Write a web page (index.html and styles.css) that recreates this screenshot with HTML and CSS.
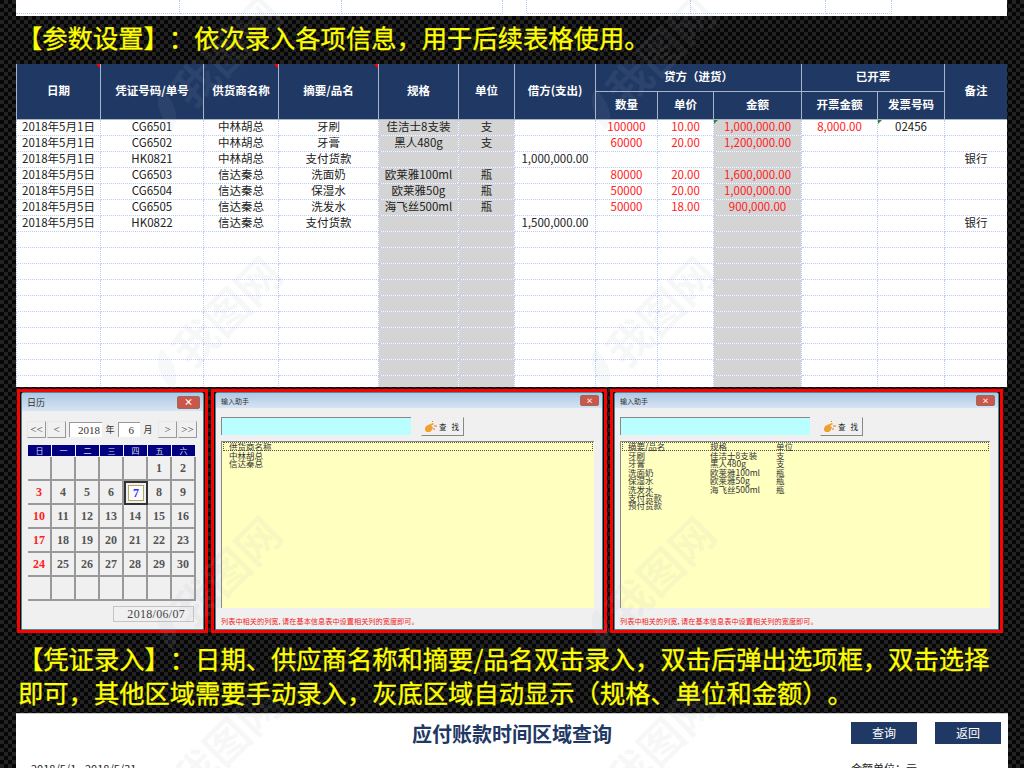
FILE: index.html
```html
<!DOCTYPE html>
<html lang="zh-CN">
<head>
  <meta charset="UTF-8">
  <title>凭证录入</title>
  <link rel="stylesheet" href="styles.css">
</head>
<body>
<div class="page">

  <div class="top-strip"><i></i><i></i><i></i><i></i><i></i><i></i><i></i></div>

  <h2 class="note-line first">【参数设置】<span class="p">：</span>依次录入各项信息<span class="p">，</span>用于后续表格使用。</h2>

  <div class="sheet">
    <table>
      <colgroup>
        <col class="c1"><col class="c2"><col class="c3"><col class="c4">
        <col class="c5 grey"><col class="c6 grey"><col class="c7"><col class="c8"><col class="c9">
        <col class="c10 grey"><col class="c11"><col class="c12"><col class="c13">
      </colgroup>
      <thead>
        <tr>
          <th rowspan="2" class="flag">日期</th>
          <th rowspan="2">凭证号码/单号</th>
          <th rowspan="2" class="flag">供货商名称</th>
          <th rowspan="2" class="flag">摘要/品名</th>
          <th rowspan="2">规格</th>
          <th rowspan="2">单位</th>
          <th rowspan="2">借方(支出)</th>
          <th colspan="3">贷方（进货）</th>
          <th colspan="2">已开票</th>
          <th rowspan="2">备注</th>
        </tr>
        <tr>
          <th>数量</th><th>单价</th><th>金额</th><th>开票金额</th><th>发票号码</th>
        </tr>
      </thead>
      <tbody>
        <tr><td>2018年5月1日</td><td>CG6501</td><td>中林胡总</td><td>牙刷</td><td>佳洁士8支装</td><td>支</td><td></td><td class="red">100000</td><td class="red">10.00</td><td class="red tick">1,000,000.00</td><td class="red">8,000.00</td><td class="tick">02456</td><td></td></tr>
        <tr><td>2018年5月1日</td><td>CG6502</td><td>中林胡总</td><td>牙膏</td><td>黑人480g</td><td>支</td><td></td><td class="red">60000</td><td class="red">20.00</td><td class="red">1,200,000.00</td><td></td><td></td><td></td></tr>
        <tr><td>2018年5月1日</td><td>HK0821</td><td>中林胡总</td><td>支付货款</td><td></td><td></td><td>1,000,000.00</td><td></td><td></td><td></td><td></td><td></td><td>银行</td></tr>
        <tr><td>2018年5月5日</td><td>CG6503</td><td>信达秦总</td><td>洗面奶</td><td>欧莱雅100ml</td><td>瓶</td><td></td><td class="red">80000</td><td class="red">20.00</td><td class="red">1,600,000.00</td><td></td><td></td><td></td></tr>
        <tr><td>2018年5月5日</td><td>CG6504</td><td>信达秦总</td><td>保湿水</td><td>欧莱雅50g</td><td>瓶</td><td></td><td class="red">50000</td><td class="red">20.00</td><td class="red">1,000,000.00</td><td></td><td></td><td></td></tr>
        <tr><td>2018年5月5日</td><td>CG6505</td><td>信达秦总</td><td>洗发水</td><td>海飞丝500ml</td><td>瓶</td><td></td><td class="red">50000</td><td class="red">18.00</td><td class="red">900,000.00</td><td></td><td></td><td></td></tr>
        <tr><td>2018年5月5日</td><td>HK0822</td><td>信达秦总</td><td>支付货款</td><td></td><td></td><td>1,500,000.00</td><td></td><td></td><td></td><td></td><td></td><td>银行</td></tr>
        <tr><td></td><td></td><td></td><td></td><td></td><td></td><td></td><td></td><td></td><td></td><td></td><td></td><td></td></tr>
        <tr><td></td><td></td><td></td><td></td><td></td><td></td><td></td><td></td><td></td><td></td><td></td><td></td><td></td></tr>
        <tr><td></td><td></td><td></td><td></td><td></td><td></td><td></td><td></td><td></td><td></td><td></td><td></td><td></td></tr>
        <tr><td></td><td></td><td></td><td></td><td></td><td></td><td></td><td></td><td></td><td></td><td></td><td></td><td></td></tr>
        <tr><td></td><td></td><td></td><td></td><td></td><td></td><td></td><td></td><td></td><td></td><td></td><td></td><td></td></tr>
        <tr><td></td><td></td><td></td><td></td><td></td><td></td><td></td><td></td><td></td><td></td><td></td><td></td><td></td></tr>
        <tr><td></td><td></td><td></td><td></td><td></td><td></td><td></td><td></td><td></td><td></td><td></td><td></td><td></td></tr>
        <tr><td></td><td></td><td></td><td></td><td></td><td></td><td></td><td></td><td></td><td></td><td></td><td></td><td></td></tr>
        <tr><td></td><td></td><td></td><td></td><td></td><td></td><td></td><td></td><td></td><td></td><td></td><td></td><td></td></tr>
        <tr><td></td><td></td><td></td><td></td><td></td><td></td><td></td><td></td><td></td><td></td><td></td><td></td><td></td></tr>
      </tbody>
    </table>
  </div>

  <div class="shots">

    <div class="shot cal-shot">
      <div class="win">
        <div class="titlebar big"><span>日历</span><b class="close">×</b></div>
        <div class="cal-body">
          <div class="cal-nav">
            <span class="nav-btn">&lt;&lt;</span>
            <span class="nav-btn">&lt;</span>
            <span class="nav-field year">2018</span>
            <span class="nav-label">年</span>
            <span class="nav-field month">6</span>
            <span class="nav-label">月</span>
            <span class="nav-btn push">&gt;</span>
            <span class="nav-btn">&gt;&gt;</span>
          </div>
          <div class="cal-head">
            <span>日</span><span>一</span><span>二</span><span>三</span><span>四</span><span>五</span><span>六</span>
          </div>
          <div class="cal-grid">
            <span></span><span></span><span></span><span></span><span></span><span>1</span><span>2</span>
            <span class="sun">3</span><span>4</span><span>5</span><span>6</span><span class="today"><em>7</em></span><span>8</span><span>9</span>
            <span class="sun">10</span><span>11</span><span>12</span><span>13</span><span>14</span><span>15</span><span>16</span>
            <span class="sun">17</span><span>18</span><span>19</span><span>20</span><span>21</span><span>22</span><span>23</span>
            <span class="sun">24</span><span>25</span><span>26</span><span>27</span><span>28</span><span>29</span><span>30</span>
            <span></span><span></span><span></span><span></span><span></span><span></span><span></span>
          </div>
          <div class="cal-foot"><span class="cal-date">2018/06/07</span></div>
        </div>
      </div>
    </div>

    <div class="shot helper-shot wide">
      <div class="win">
        <div class="titlebar"><span>输入助手</span><b class="close">×</b></div>
        <div class="helper-body">
          <div class="search-row">
            <div class="search-box"></div>
            <div class="find-btn">
              <svg width="13" height="12" viewBox="0 0 13 12"><path d="M1 8c0-2 1-3 3-4l5-2 1 1-3 2 2 1-1 3-2 2H3C2 11 1 10 1 8z" fill="#f0a030"/><path d="M10 5h3M9 8h2M8 0l1 1" stroke="#e07818" fill="none"/></svg>
              <span>查   找</span>
            </div>
          </div>
          <div class="list">
            <div class="list-row head"><span>供货商名称</span></div>
            <div class="list-row"><span>中林胡总</span></div>
            <div class="list-row"><span>信达秦总</span></div>
          </div>
          <p class="hint">列表中相关的列宽, 请在基本信息表中设置相关列的宽度即可。</p>
        </div>
      </div>
    </div>

    <div class="shot helper-shot">
      <div class="win">
        <div class="titlebar"><span>输入助手</span><b class="close">×</b></div>
        <div class="helper-body">
          <div class="search-row">
            <div class="search-box"></div>
            <div class="find-btn">
              <svg width="13" height="12" viewBox="0 0 13 12"><path d="M1 8c0-2 1-3 3-4l5-2 1 1-3 2 2 1-1 3-2 2H3C2 11 1 10 1 8z" fill="#f0a030"/><path d="M10 5h3M9 8h2M8 0l1 1" stroke="#e07818" fill="none"/></svg>
              <span>查   找</span>
            </div>
          </div>
          <div class="list">
            <div class="list-row head cols"><span>摘要/品名</span><span>规格</span><span>单位</span></div>
            <div class="list-row cols"><span>牙刷</span><span>佳洁士8支装</span><span>支</span></div>
            <div class="list-row cols"><span>牙膏</span><span>黑人480g</span><span>支</span></div>
            <div class="list-row cols"><span>洗面奶</span><span>欧莱雅100ml</span><span>瓶</span></div>
            <div class="list-row cols"><span>保湿水</span><span>欧莱雅50g</span><span>瓶</span></div>
            <div class="list-row cols"><span>洗发水</span><span>海飞丝500ml</span><span>瓶</span></div>
            <div class="list-row cols"><span>支付货款</span></div>
            <div class="list-row cols"><span>预付货款</span></div>
          </div>
          <p class="hint">列表中相关的列宽, 请在基本信息表中设置相关列的宽度即可。</p>
        </div>
      </div>
    </div>

  </div>

  <h2 class="note-line second">【凭证录入】<span class="p">：</span>日期、供应商名称和摘要/品名双击录入<span class="p">，</span>双击后弹出选项框<span class="p">，</span>双击选择<br>即可<span class="p">，</span>其他区域需要手动录入<span class="p">，</span>灰底区域自动显示（规格、单位和金额）。</h2>

  <div class="query">
    <div class="query-top">
      <div class="query-title">应付账款时间区域查询</div>
      <span class="query-btn">查询</span>
      <span class="query-btn">返回</span>
    </div>
    <div class="query-meta">
      <span>2018/5/1 - 2018/5/31</span>
      <span>金额单位：元</span>
    </div>
  </div>

  <div class="wm wm1">我图网</div>
  <div class="wm wm2">我图网</div>
  <div class="wm wm3">我图网</div>
  <div class="wm wm4">我图网</div>
  <div class="wm wm5">我图网</div>
  <div class="wm wm6">我图网</div>
  <div class="wm wm7">我图网</div>
  <div class="wm wm8">我图网</div>

</div>
</body>
</html>
```

FILE: styles.css
```css
html, body {
  margin: 0;
  height: 768px;
  overflow: hidden;
}

body {
  font-family: "Noto Sans CJK SC", "Liberation Sans", sans-serif;
  background: #0a0a0a;
}

.page {
  position: relative;
  height: 768px;
  overflow: hidden;
  background: repeating-conic-gradient(#222222 0 25%, #060606 0 50%) 0 0 / 8px 8px;
}

/* top strip: tail of the sheet above */
.top-strip {
  margin-left: 16px;
  width: 991px;
  height: 16px;
  display: flex;
  background: #fff;
}

.top-strip i {
  height: 13px;
  box-sizing: content-box;
  border-right: 1px dotted #b8c8f0;
  border-bottom: 1px dotted #b8c8f0;
}

.top-strip i:nth-child(1) { width: 163px; }
.top-strip i:nth-child(2) { width: 161px; }
.top-strip i:nth-child(3) { width: 160px; }
.top-strip i:nth-child(4) { width: 23px; border-bottom: none; }
.top-strip i:nth-child(5) { width: 163px; }
.top-strip i:nth-child(6) { width: 134px; }
.top-strip i:nth-child(7) { width: 65px; }

.note-line {
  margin: 0;
  color: #ffff00;
  font-size: 25.3px;
  font-weight: 400;
  text-spacing-trim: space-all;
  white-space: nowrap;
  -webkit-text-stroke: 0.3px #ffff00;
}

.note-line .p {
  font-family: "Noto Sans CJK TC", sans-serif;
}

.note-line.first {
  height: 48px;
  line-height: 43px;
  padding-left: 17px;
}

.note-line.second {
  height: 80px;
  box-sizing: border-box;
  padding: 8px 0 0 18px;
  line-height: 34px;
}

/* main sheet */
.sheet {
  margin-left: 16px;
  width: 991px;
  height: 323px;
  overflow: hidden;
  background: #fff;
}

table {
  table-layout: fixed;
  width: 991px;
  border-collapse: collapse;
  font-size: 11.5px;
  color: #222;
}

.c1 { width: 84px; }
.c2 { width: 103px; }
.c3 { width: 75px; }
.c4 { width: 100px; }
.c5 { width: 80px; }
.c6 { width: 56px; }
.c7 { width: 81px; }
.c8 { width: 62px; }
.c9 { width: 56px; }
.c10 { width: 88px; }
.c11 { width: 76px; }
.c12 { width: 67px; }
.c13 { width: 63px; }

col.grey { background: #d4d4d4; }

th {
  position: relative;
  height: 24px;
  padding: 0 0 3px;
  font-size: 11.5px;
  font-weight: 700;
  color: #fff;
  background: #1f3864;
  border: 1px solid #aab4c8;
  border-top: none;
}

th.flag::after {
  content: "";
  position: absolute;
  top: 0;
  right: 0;
  border-top: 4px solid #f00;
  border-left: 4px solid transparent;
}

td {
  position: relative;
  height: 12px;
  padding: 0 0 3px;
  line-height: 12px;
  text-align: center;
  white-space: nowrap;
  border: 1px dotted #bccdf4;
}

td.red { color: #ff2020; }

td.tick::before {
  content: "";
  position: absolute;
  top: 0;
  left: 0;
  border-top: 4px solid #2a8a3a;
  border-right: 4px solid transparent;
}

/* screenshots row */
.shots {
  display: flex;
  gap: 3px;
  margin: 2px 0 0 17px;
  height: 244px;
}

.shot {
  box-sizing: border-box;
  border: 3px solid #f00;
  padding: 0 1px;
  background: #0b0b0b;
}

.cal-shot { width: 191px; }
.helper-shot { width: 393px; }
.helper-shot.wide { width: 396px; }

.win {
  height: 100%;
  box-sizing: border-box;
  display: flex;
  flex-direction: column;
  background: #f0f0f0;
  border: 1px solid #4d8a9a;
  border-radius: 3px 3px 0 0;
}

.titlebar {
  flex: none;
  height: 15px;
  display: flex;
  align-items: center;
  justify-content: space-between;
  padding: 0 3px 0 5px;
  font-size: 7px;
  color: #333;
  background: linear-gradient(#aec8e4, #d6e4f2);
}

.titlebar.big {
  height: 18px;
  font-size: 9px;
}

.close {
  width: 17px;
  height: 9px;
  line-height: 8px;
  text-align: center;
  color: #fff;
  border-radius: 2px;
  background: #c9584a;
  border: 1px solid #9a6a60;
}

.titlebar.big .close {
  width: 21px;
  height: 11px;
  line-height: 10px;
}

/* calendar */
.cal-body {
  flex: 1;
  padding: 9px 6px 0 5px;
}

.cal-nav {
  display: flex;
  align-items: center;
  gap: 1px;
  height: 18px;
  font-family: "Liberation Serif", serif;
  font-size: 11px;
  color: #333;
}

.nav-btn {
  width: 19px;
  height: 17px;
  box-sizing: border-box;
  line-height: 15px;
  text-align: center;
  background: #f0f0f0;
  border: 1px solid #e8e8e8;
  border-right-color: #999;
  border-bottom-color: #999;
}

.nav-btn.push { margin-left: auto; }

.nav-field {
  height: 15px;
  line-height: 15px;
  text-align: right;
  padding-right: 2px;
  box-sizing: border-box;
  background: #fff;
  border-left: 1px solid #999;
  border-top: 1px solid #999;
}

.nav-field.year { width: 33px; margin-left: 2px; }
.nav-field.month { width: 22px; padding-right: 6px; }

.nav-label {
  width: 14px;
  text-align: center;
  font-family: "Noto Sans CJK SC", sans-serif;
  font-size: 9px;
}

.cal-head {
  display: grid;
  grid-template-columns: repeat(7, 23px);
  gap: 1px;
  margin-top: 7px;
  padding-left: 1px;
}

.cal-head span {
  height: 11px;
  line-height: 11px;
  text-align: center;
  font-size: 8px;
  color: #ddd;
  background: #000080;
}

.cal-grid {
  display: grid;
  grid-template-columns: repeat(7, 24px);
  grid-auto-rows: 24px;
  margin: 1px 0 0 1px;
  font-family: "Liberation Serif", serif;
  font-size: 12px;
  font-weight: 700;
  color: #555;
}

.cal-grid span {
  display: flex;
  align-items: center;
  justify-content: center;
  box-sizing: border-box;
  border-right: 2px solid #999;
  border-bottom: 2px solid #999;
}

.cal-grid .sun { color: #ff2020; }

.cal-grid .today {
  border: 2px solid #333;
  padding: 2px;
}

.today em {
  flex: 1;
  align-self: stretch;
  display: flex;
  align-items: center;
  justify-content: center;
  font-style: normal;
  color: #3030f0;
  background: #fafafa;
  border: 1px solid #b0a860;
}

.cal-foot {
  display: flex;
  justify-content: flex-end;
  margin: 5px 3px 0 0;
}

.cal-date {
  width: 81px;
  height: 16px;
  box-sizing: border-box;
  line-height: 15px;
  text-align: right;
  padding-right: 8px;
  font-family: "Liberation Serif", serif;
  font-size: 12px;
  letter-spacing: 0.3px;
  color: #444;
  border: 1px solid #c4c4c4;
}

/* input helper */
.helper-body {
  flex: 1;
  display: flex;
  flex-direction: column;
  padding: 9px 8px 0 5px;
}

.search-row {
  display: flex;
  gap: 10px;
}

.search-box {
  width: 190px;
  height: 18px;
  box-sizing: border-box;
  background: #b9ffff;
  border-left: 1px solid #888;
  border-top: 1px solid #888;
}

.find-btn {
  width: 43px;
  height: 19px;
  box-sizing: border-box;
  display: flex;
  align-items: center;
  gap: 2px;
  padding-left: 2px;
  font-size: 7.5px;
  color: #222;
  white-space: pre;
  border: 1px solid #eee;
  border-right-color: #888;
  border-bottom-color: #888;
}

.list {
  height: 167px;
  box-sizing: border-box;
  margin-top: 5px;
  padding: 0 1px;
  background: #ffffc0;
  border-left: 1px solid #888;
  border-top: 1px solid #888;
  font-size: 8.5px;
  line-height: 8px;
  color: #333;
}

.list-row {
  height: 8.4px;
  padding-left: 6px;
  white-space: nowrap;
}

.list-row.head {
  box-sizing: border-box;
  height: 9px;
  line-height: 7px;
  border: 1px dotted #555;
  padding-left: 5px;
}

.list-row.cols {
  display: flex;
}

.list-row.cols span:nth-child(1) { width: 82px; }
.list-row.cols span:nth-child(2) { width: 66px; }

.hint {
  margin: 8px 0 0;
  font-size: 7.2px;
  line-height: 10px;
  color: #f02020;
  white-space: nowrap;
}

/* bottom query panel */
.query {
  margin-left: 16px;
  width: 992px;
  height: 55px;
  box-sizing: border-box;
  background: #fff;
  border-top: 1px solid #ccc;
  padding: 8px 7px 0 15px;
}

.query-top {
  position: relative;
  display: flex;
  justify-content: flex-end;
  gap: 18px;
}

.query-title {
  position: absolute;
  left: 0;
  right: 0;
  padding-right: 8px;
  text-align: center;
  font-size: 20px;
  line-height: 24px;
  font-weight: 700;
  color: #1f3864;
}

.query-btn {
  position: relative;
  width: 66px;
  height: 22px;
  line-height: 22px;
  text-align: center;
  font-size: 12px;
  color: #fff;
  background: #1f3864;
}

.query-meta {
  display: flex;
  justify-content: space-between;
  margin-top: 17px;
  padding-right: 84px;
  font-size: 11px;
  line-height: 14px;
  color: #222;
}

/* image-site watermark, sits over everything */
.wm {
  position: absolute;
  font-size: 44px;
  font-weight: 700;
  line-height: 50px;
  white-space: nowrap;
  color: rgba(170, 175, 190, 0.09);
  transform: rotate(-45deg);
  pointer-events: none;
}

.wm::before {
  content: "";
  position: absolute;
  left: -28px;
  top: 8px;
  width: 22px;
  height: 36px;
  border-radius: 100% 0 100% 0;
  background: rgba(170, 175, 190, 0.09);
}

.wm1 { left: 159px; top: 25px; }
.wm2 { left: 159px; top: 285px; }
.wm3 { left: 159px; top: 545px; }
.wm4 { left: 159px; top: 715px; }
.wm5 { left: 593px; top: 25px; }
.wm6 { left: 593px; top: 285px; }
.wm7 { left: 593px; top: 545px; }
.wm8 { left: 593px; top: 715px; }
```
